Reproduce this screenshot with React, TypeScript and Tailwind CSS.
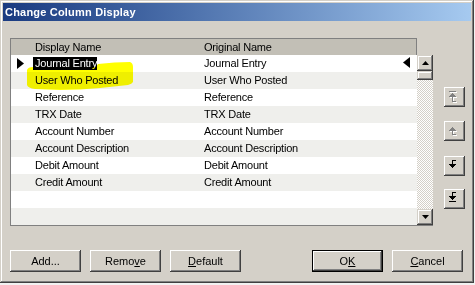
import React from 'react'

const rows: [string, string][] = [
  ['Journal Entry', 'Journal Entry'],
  ['User Who Posted', 'User Who Posted'],
  ['Reference', 'Reference'],
  ['TRX Date', 'TRX Date'],
  ['Account Number', 'Account Number'],
  ['Account Description', 'Account Description'],
  ['Debit Amount', 'Debit Amount'],
  ['Credit Amount', 'Credit Amount'],
  ['', ''],
  ['', ''],
]

type Px = [number, number, number, number]

// pixel icons for the move buttons (x, y, w, h)
const downPx: Px[] = [[8, 4, 4, 1], [8, 4, 1, 5], [5, 8, 7, 1], [6, 9, 5, 1], [7, 10, 3, 1], [8, 11, 1, 1]]
const bottomPx: Px[] = [[8, 3, 4, 1], [8, 3, 1, 5], [5, 7, 7, 1], [6, 8, 5, 1], [7, 9, 3, 1], [8, 10, 1, 1], [5, 12, 7, 1]]
const upPx: Px[] = [[8, 6, 1, 1], [7, 7, 3, 1], [6, 8, 5, 1], [5, 9, 7, 1], [8, 9, 1, 5], [8, 13, 4, 1]]
const topPx: Px[] = [[5, 4, 7, 1], [8, 6, 1, 1], [7, 7, 3, 1], [6, 8, 5, 1], [5, 9, 7, 1], [8, 9, 1, 6], [8, 14, 4, 1]]

function PixIcon({ px, disabled }: { px: Px[]; disabled?: boolean }) {
  return (
    <svg width="21" height="20" viewBox="0 0 21 20" shapeRendering="crispEdges">
      {disabled && px.map(([x, y, w, h], i) => <rect key={'s' + i} x={x + 1} y={y + 1} width={w} height={h} fill="#ffffff" />)}
      {px.map(([x, y, w, h], i) => <rect key={i} x={x} y={y} width={w} height={h} fill={disabled ? '#808080' : '#000000'} />)}
    </svg>
  )
}

function Grid() {
  return (
    <div className="w-[423px] flex flex-col">
      <div className="w-[407px] h-[17px] flex items-center bg-[#c2bfb6] border-t border-l border-r border-[#808080] tracking-[-0.2px]">
        <div className="w-[22px]" />
        <div className="w-[169px] pl-[2px]">Display Name</div>
        <div className="pl-[2px]">Original Name</div>
      </div>
      <div className="flex border-l border-b border-[#808080]">
        <div className="w-[406px] flex flex-col">
          {rows.map(([a, b], i) => (
            <div key={i} className={`relative h-[17px] flex items-center tracking-[-0.2px] ${i % 2 ? 'bg-[#efefec]' : 'bg-white'}`}>
              <div className="w-[22px] h-full flex items-center pl-[6px]">
                {i === 0 && (
                  <svg width="7" height="11" viewBox="0 0 7 11"><polygon points="0,0 7,5.5 0,11" fill="#000" /></svg>
                )}
              </div>
              <div className="w-[169px]">
                {i === 0 ? (
                  <span className="inline-block h-[13px] leading-[13px] bg-black text-white pl-[2px]">{a}</span>
                ) : (
                  <span className="pl-[2px]">{a}</span>
                )}
              </div>
              <div className="pl-[2px]">{b}</div>
              {i === 0 && (
                <svg className="absolute left-[392px] top-[2px]" width="7" height="11" viewBox="0 0 7 11">
                  <polygon points="7,0 0,5.5 7,11" fill="#000" />
                </svg>
              )}
            </div>
          ))}
        </div>
        <div className="w-[16px] flex flex-col">
          <div className="h-[16px] bg-[#d4d0c8] flex items-center justify-center shadow-[inset_-1px_-1px_#404040,inset_1px_1px_#d4d0c8,inset_-2px_-2px_#808080,inset_2px_2px_#ffffff]">
            <svg width="7" height="4" viewBox="0 0 7 4"><polygon points="3.5,0 7,4 0,4" fill="#000" /></svg>
          </div>
          <div className="h-[9px] bg-[#d4d0c8] shadow-[inset_-1px_-1px_#404040,inset_1px_1px_#d4d0c8,inset_-2px_-2px_#808080,inset_2px_2px_#ffffff]" />
          <div className="flex-1 bg-[image:repeating-conic-gradient(#d4d0c8_0%_25%,#ffffff_0%_50%)] bg-[length:2px_2px]" />
          <div className="h-[16px] bg-[#d4d0c8] flex items-center justify-center shadow-[inset_-1px_-1px_#404040,inset_1px_1px_#d4d0c8,inset_-2px_-2px_#808080,inset_2px_2px_#ffffff]">
            <svg width="7" height="4" viewBox="0 0 7 4"><polygon points="0,0 7,0 3.5,4" fill="#000" /></svg>
          </div>
        </div>
      </div>
    </div>
  )
}

function SideButton({ px, disabled, className }: { px: Px[]; disabled?: boolean; className: string }) {
  return (
    <div className={`w-[21px] h-[20px] bg-[#d4d0c8] shadow-[inset_-1px_-1px_#404040,inset_1px_1px_#ffffff,inset_-2px_-2px_#808080,inset_2px_2px_#d4d0c8] ${className}`}>
      <PixIcon px={px} disabled={disabled} />
    </div>
  )
}

function Btn({ children, def }: { children: React.ReactNode; def?: boolean }) {
  return (
    <div className={`w-[71px] h-[22px] flex items-center justify-center bg-[#d4d0c8] ${def
      ? 'shadow-[inset_0_0_0_1px_#000000,inset_-2px_-2px_#404040,inset_2px_2px_#ffffff,inset_-3px_-3px_#808080]'
      : 'shadow-[inset_-1px_-1px_#404040,inset_1px_1px_#ffffff,inset_-2px_-2px_#808080,inset_2px_2px_#d4d0c8]'}`}>
      <span className="pt-[1px]">{children}</span>
    </div>
  )
}

export default function App() {
  return (
    <div className="w-[475px] h-[285px] bg-[#f2f2f2] font-['Liberation_Sans',Arial,sans-serif] text-[11px] text-black overflow-hidden">
      <div className="relative w-[474px] h-[283px] bg-[#d4d0c8] p-[3px] flex flex-col shadow-[inset_-1px_-1px_#404040,inset_1px_1px_#d4d0c8,inset_-2px_-2px_#808080,inset_2px_2px_#ffffff]">
        <div className="h-[18px] shrink-0 flex items-center pl-[2px] bg-linear-to-r from-[#1a3a80] to-[#a6caf0] text-white font-bold tracking-[0.2px]">
          Change Column Display
        </div>

        <div className="flex mt-[17px] pl-[7px]">
          <Grid />
          <div className="flex flex-col ml-[11px]">
            <SideButton px={topPx} disabled className="mt-[49px]" />
            <SideButton px={upPx} disabled className="mt-[14px]" />
            <SideButton px={downPx} className="mt-[15px]" />
            <SideButton px={bottomPx} className="mt-[13px]" />
          </div>
        </div>

        <div className="flex mt-[24px] pl-[7px] pr-[8px]">
          <div className="flex gap-[9px]">
            <Btn>Add...</Btn>
            <Btn>Remo<span className="underline underline-offset-[1px]">v</span>e</Btn>
            <Btn><span className="underline underline-offset-[1px]">D</span>efault</Btn>
          </div>
          <div className="flex gap-[9px] ml-auto">
            <Btn def>O<span className="underline underline-offset-[1px]">K</span></Btn>
            <Btn><span className="underline underline-offset-[1px]">C</span>ancel</Btn>
          </div>
        </div>

        {/* highlighter mark */}
        <svg className="absolute left-0 top-0 pointer-events-none mix-blend-multiply" width="140" height="95" viewBox="0 0 140 95">
          <path d="M27,70 Q28,67 33,67 L96,67 L98,64 Q115,62 130,62 Q133,63 133,67 L133,82 Q132,84 128,85 L100,88 Q80,90 60,90 L35,89 Q28,88 27,85 Z" fill="#ffff00" />
        </svg>
      </div>
    </div>
  )
}
